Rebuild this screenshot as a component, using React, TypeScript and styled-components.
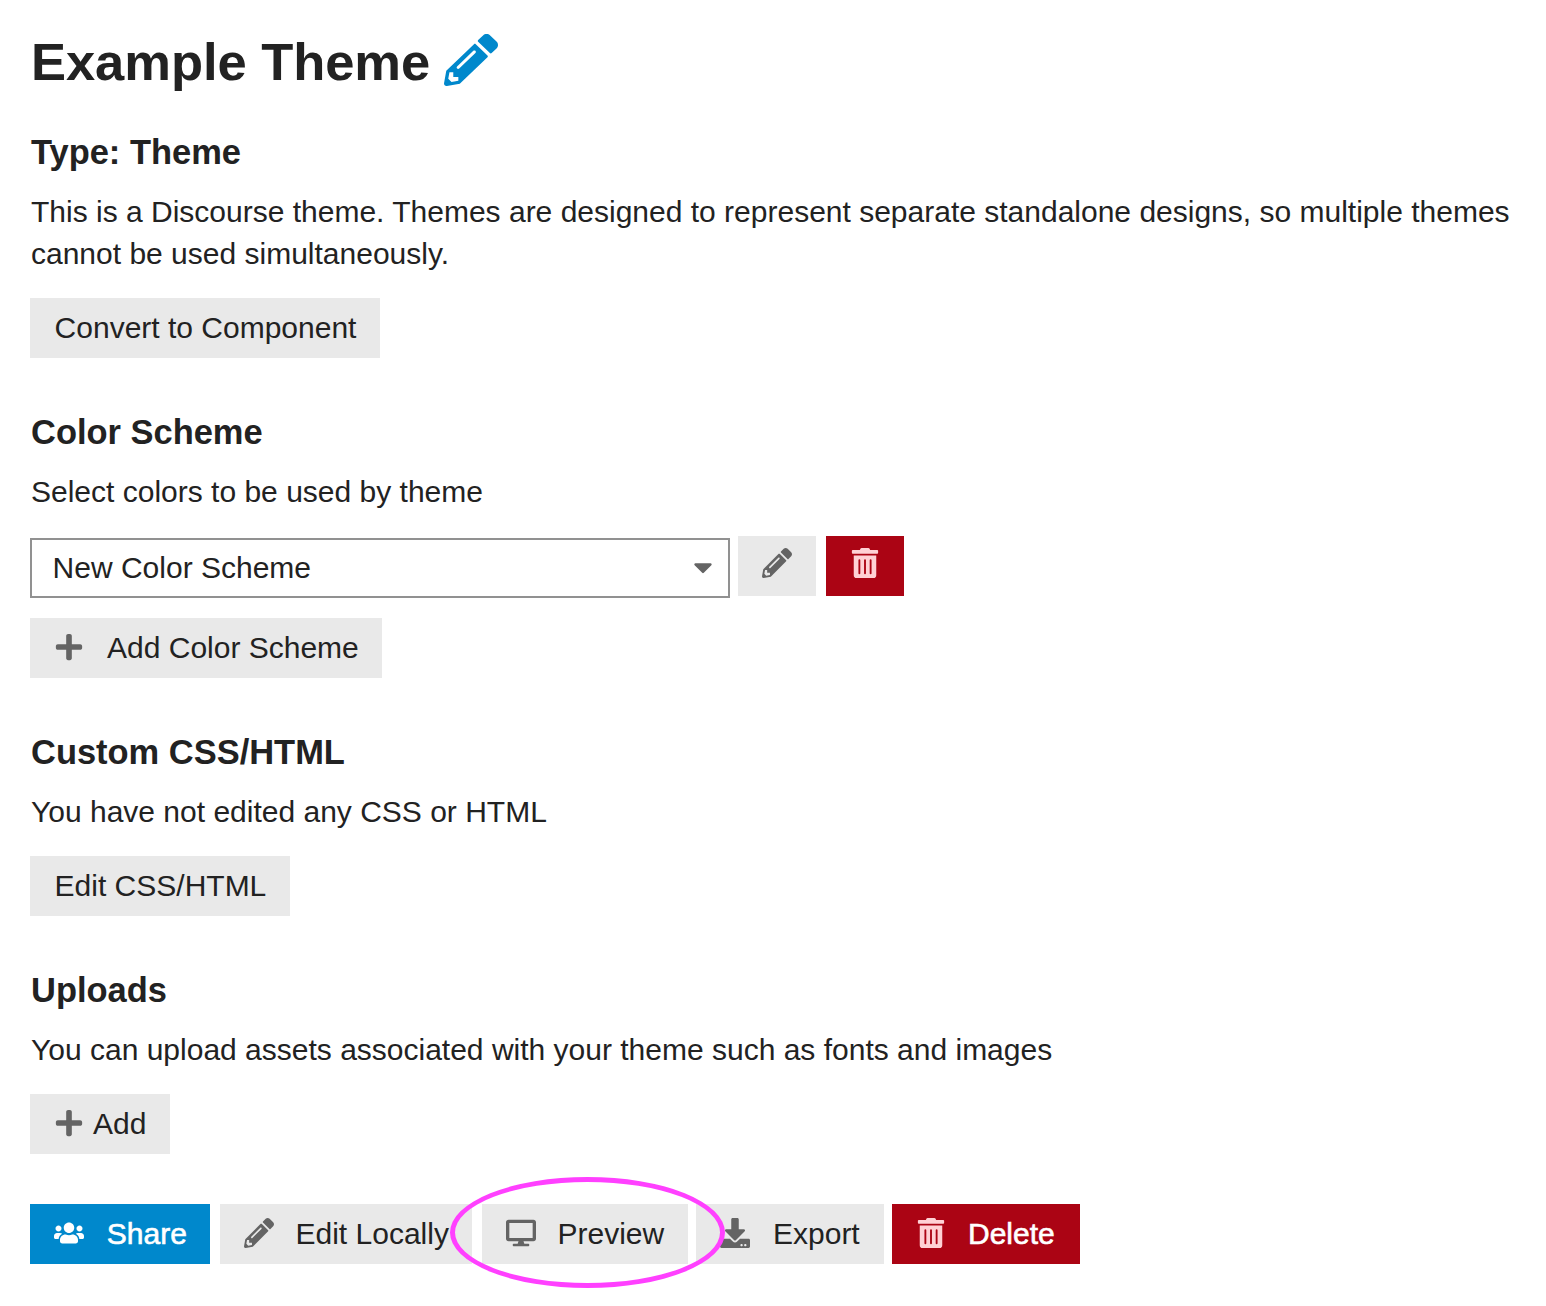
import React from "react";
import styled, { createGlobalStyle, css } from "styled-components";
import {
  FaPencilAlt,
  FaTrashAlt,
  FaPlus,
  FaUsers,
  FaDesktop,
  FaDownload,
  FaCaretDown,
} from "react-icons/fa";

const GlobalStyle = createGlobalStyle`
  *, *::before, *::after { box-sizing: border-box; }
  body {
    margin: 0;
    background: #fff;
    color: #222;
    font-family: "Liberation Sans", Helvetica, Arial, sans-serif;
    font-size: 30px;
    line-height: 42px;
  }
`;

const Page = styled.main`
  height: 1306px;
  padding: 32px 0 0 30px;
  overflow: hidden;
`;

const Title = styled.h1`
  display: flex;
  align-items: center;
  gap: 14px;
  margin: 0 0 40px;
  height: 60px;
  font-size: 52.5px;
  line-height: 60px;
  white-space: nowrap;
`;

const TitleText = styled.span`
  width: 400px;
  padding-left: 1px;
  letter-spacing: -0.05px;
`;

const EditTitle = styled(FaPencilAlt)`
  width: 54px;
  height: 52px;
  margin-bottom: 4px;
  color: #0088cc;
`;

const Section = styled.section`
  margin-bottom: 54px;

  &:last-of-type {
    margin-bottom: 50px;
  }
`;

const Heading = styled.h3`
  margin: 0 0 19px;
  padding-left: 1px;
  font-size: 34.46px;
  line-height: 40px;
`;

const Text = styled.p`
  margin: 0 0 23px;
  padding-left: 1px;
  white-space: nowrap;
`;

type Tone = "default" | "primary" | "danger";

const tones = {
  default: css`
    background: #e9e9e9;
    color: #222;
    --icon: #646464;
  `,
  primary: css`
    background: #0088cc;
    color: #fff;
    --icon: #fff;
    -webkit-text-stroke: 0.6px #fff;
  `,
  danger: css`
    background: #ab0414;
    color: #fff;
    --icon: #ffd1d5;
    -webkit-text-stroke: 0.6px #fff;
  `,
};

const Button = styled.button<{ $width: number; $tone?: Tone; $gap?: number }>`
  display: flex;
  align-items: center;
  gap: ${(p) => p.$gap ?? 22}px;
  width: ${(p) => p.$width}px;
  height: 60px;
  padding: 0 0 0 24px;
  border: 0;
  font: inherit;
  white-space: nowrap;
  ${(p) => tones[p.$tone ?? "default"]}

  svg {
    flex: none;
    width: 30px;
    height: 30px;
    margin-bottom: 2px;
    color: var(--icon);
    stroke-width: 0;
  }
`;

const TextButton = styled(Button)`
  padding-left: 24.6px;
`;

const IconButton = styled(Button)`
  svg {
    margin-bottom: 6px;
  }
`;

const SchemeRow = styled.div`
  display: flex;
  height: 62px;
  margin-bottom: 20px;
`;

const Select = styled.div`
  display: flex;
  align-items: center;
  justify-content: space-between;
  width: 700px;
  height: 60px;
  margin: 2px 8px 0 0;
  padding: 0 10px 0 20.6px;
  border: 2px solid #919191;

  svg {
    width: 30px;
    height: 30px;
    margin-bottom: 2px;
    color: #646464;
  }
`;

const EditScheme = styled(IconButton)`
  margin-right: 10px;
`;

const Actions = styled.div`
  position: relative;
  display: flex;
  gap: 8px;
`;

const WideGap = styled.div`
  display: flex;
  gap: 10px;
`;

const Highlight = styled.div`
  position: absolute;
  left: 420px;
  top: -27px;
  width: 275px;
  height: 111px;
  border: 5px solid #ff40ff;
  border-radius: 50%;
  pointer-events: none;
`;

export default function App() {
  return (
    <Page>
      <GlobalStyle />
      <Title>
        <TitleText>Example Theme</TitleText>
        <EditTitle preserveAspectRatio="none" />
      </Title>

      <Section>
        <Heading>Type: Theme</Heading>
        <Text>
          This is a Discourse theme. Themes are designed to represent separate standalone designs, so multiple themes
          <br />
          cannot be used simultaneously.
        </Text>
        <TextButton $width={350}>Convert to Component</TextButton>
      </Section>

      <Section>
        <Heading>Color Scheme</Heading>
        <Text>Select colors to be used by theme</Text>
        <SchemeRow>
          <Select>
            New Color Scheme
            <FaCaretDown />
          </Select>
          <EditScheme $width={78} aria-label="Edit">
            <FaPencilAlt />
          </EditScheme>
          <IconButton $width={78} $tone="danger" aria-label="Delete">
            <FaTrashAlt />
          </IconButton>
        </SchemeRow>
        <Button $width={352} $gap={23}>
          <FaPlus />
          Add Color Scheme
        </Button>
      </Section>

      <Section>
        <Heading>Custom CSS/HTML</Heading>
        <Text>You have not edited any CSS or HTML</Text>
        <TextButton $width={260}>Edit CSS/HTML</TextButton>
      </Section>

      <Section>
        <Heading>Uploads</Heading>
        <Text>You can upload assets associated with your theme such as fonts and images</Text>
        <Button $width={140} $gap={9}>
          <FaPlus />
          Add
        </Button>
      </Section>

      <Actions>
        <WideGap>
          <Button $width={180} $tone="primary" $gap={22.8}>
            <FaUsers />
            Share
          </Button>
          <Button $width={252} $gap={21.5}>
            <FaPencilAlt />
            Edit Locally
          </Button>
          <Button $width={206} $gap={21.5}>
            <FaDesktop />
            Preview
          </Button>
        </WideGap>
        <Button $width={188} $gap={23}>
          <FaDownload />
          Export
        </Button>
        <Button $width={188} $tone="danger">
          <FaTrashAlt />
          Delete
        </Button>
        <Highlight />
      </Actions>
    </Page>
  );
}
